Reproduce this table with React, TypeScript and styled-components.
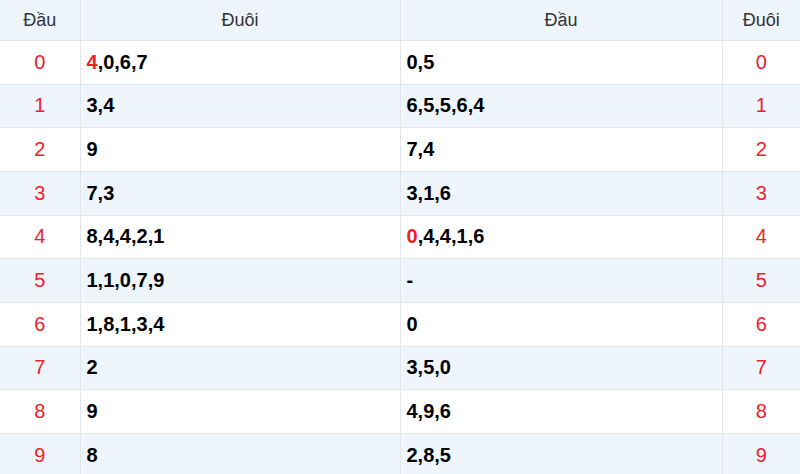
import styled, { createGlobalStyle } from "styled-components";

const GlobalStyle = createGlobalStyle`
  body {
    margin: 0;
    background: #fff;
    font-family: "Liberation Sans", Arial, sans-serif;
  }
`;

type Part = { text: string; hot?: boolean };

type Row = {
  num: number;
  tail: Part[];
  head: Part[];
};

const rows: Row[] = [
  { num: 0, tail: [{ text: "4", hot: true }, { text: ",0,6,7" }], head: [{ text: "0,5" }] },
  { num: 1, tail: [{ text: "3,4" }], head: [{ text: "6,5,5,6,4" }] },
  { num: 2, tail: [{ text: "9" }], head: [{ text: "7,4" }] },
  { num: 3, tail: [{ text: "7,3" }], head: [{ text: "3,1,6" }] },
  { num: 4, tail: [{ text: "8,4,4,2,1" }], head: [{ text: "0", hot: true }, { text: ",4,4,1,6" }] },
  { num: 5, tail: [{ text: "1,1,0,7,9" }], head: [{ text: "-" }] },
  { num: 6, tail: [{ text: "1,8,1,3,4" }], head: [{ text: "0" }] },
  { num: 7, tail: [{ text: "2" }], head: [{ text: "3,5,0" }] },
  { num: 8, tail: [{ text: "9" }], head: [{ text: "4,9,6" }] },
  { num: 9, tail: [{ text: "8" }], head: [{ text: "2,8,5" }] },
];

const App = () => {
  const renderParts = (parts: Part[]) =>
    parts.map((p, i) => (
      <Digits key={i} $hot={p.hot}>
        {p.text}
      </Digits>
    ));

  return (
    <>
      <GlobalStyle />
      <Table>
        <colgroup>
          <col style={{ width: 80 }} />
          <col style={{ width: 320 }} />
          <col style={{ width: 322 }} />
          <col style={{ width: 78 }} />
        </colgroup>
        <thead>
          <tr>
            <Th>Đầu</Th>
            <Th>Đuôi</Th>
            <Th>Đầu</Th>
            <Th>Đuôi</Th>
          </tr>
        </thead>
        <tbody>
          {rows.map((row) => (
            <Tr key={row.num} $alt={row.num % 2 === 1}>
              <NumCell>{row.num}</NumCell>
              <ListCell>{renderParts(row.tail)}</ListCell>
              <ListCell>{renderParts(row.head)}</ListCell>
              <NumCell>{row.num}</NumCell>
            </Tr>
          ))}
        </tbody>
      </Table>
    </>
  );
};

export default App;

const Table = styled.table`
  width: 800px;
  border-collapse: collapse;
  table-layout: fixed;

  th,
  td {
    border: 1px solid #e1e6ed;
  }
  tr > :first-child {
    border-left: none;
  }
  tr > :last-child {
    border-right: none;
  }
  thead th {
    border-top: none;
  }
`;

const Th = styled.th`
  height: 40px;
  padding: 0;
  background: #eef5fd;
  color: #333;
  font-weight: normal;
  font-size: 18px;
  text-align: center;
`;

const Tr = styled.tr<{ $alt: boolean }>`
  background: ${(p) => (p.$alt ? "#eef5fd" : "#fff")};
`;

const NumCell = styled.td`
  height: 42.67px;
  padding: 0;
  text-align: center;
  color: #f0202a;
  font-size: 20px;
`;

const ListCell = styled.td`
  height: 42.67px;
  padding: 0 6px;
  text-align: left;
  font-size: 20px;
  font-weight: bold;
  color: #000;
`;

const Digits = styled.span<{ $hot?: boolean }>`
  color: ${(p) => (p.$hot ? "#f0202a" : "inherit")};
`;
